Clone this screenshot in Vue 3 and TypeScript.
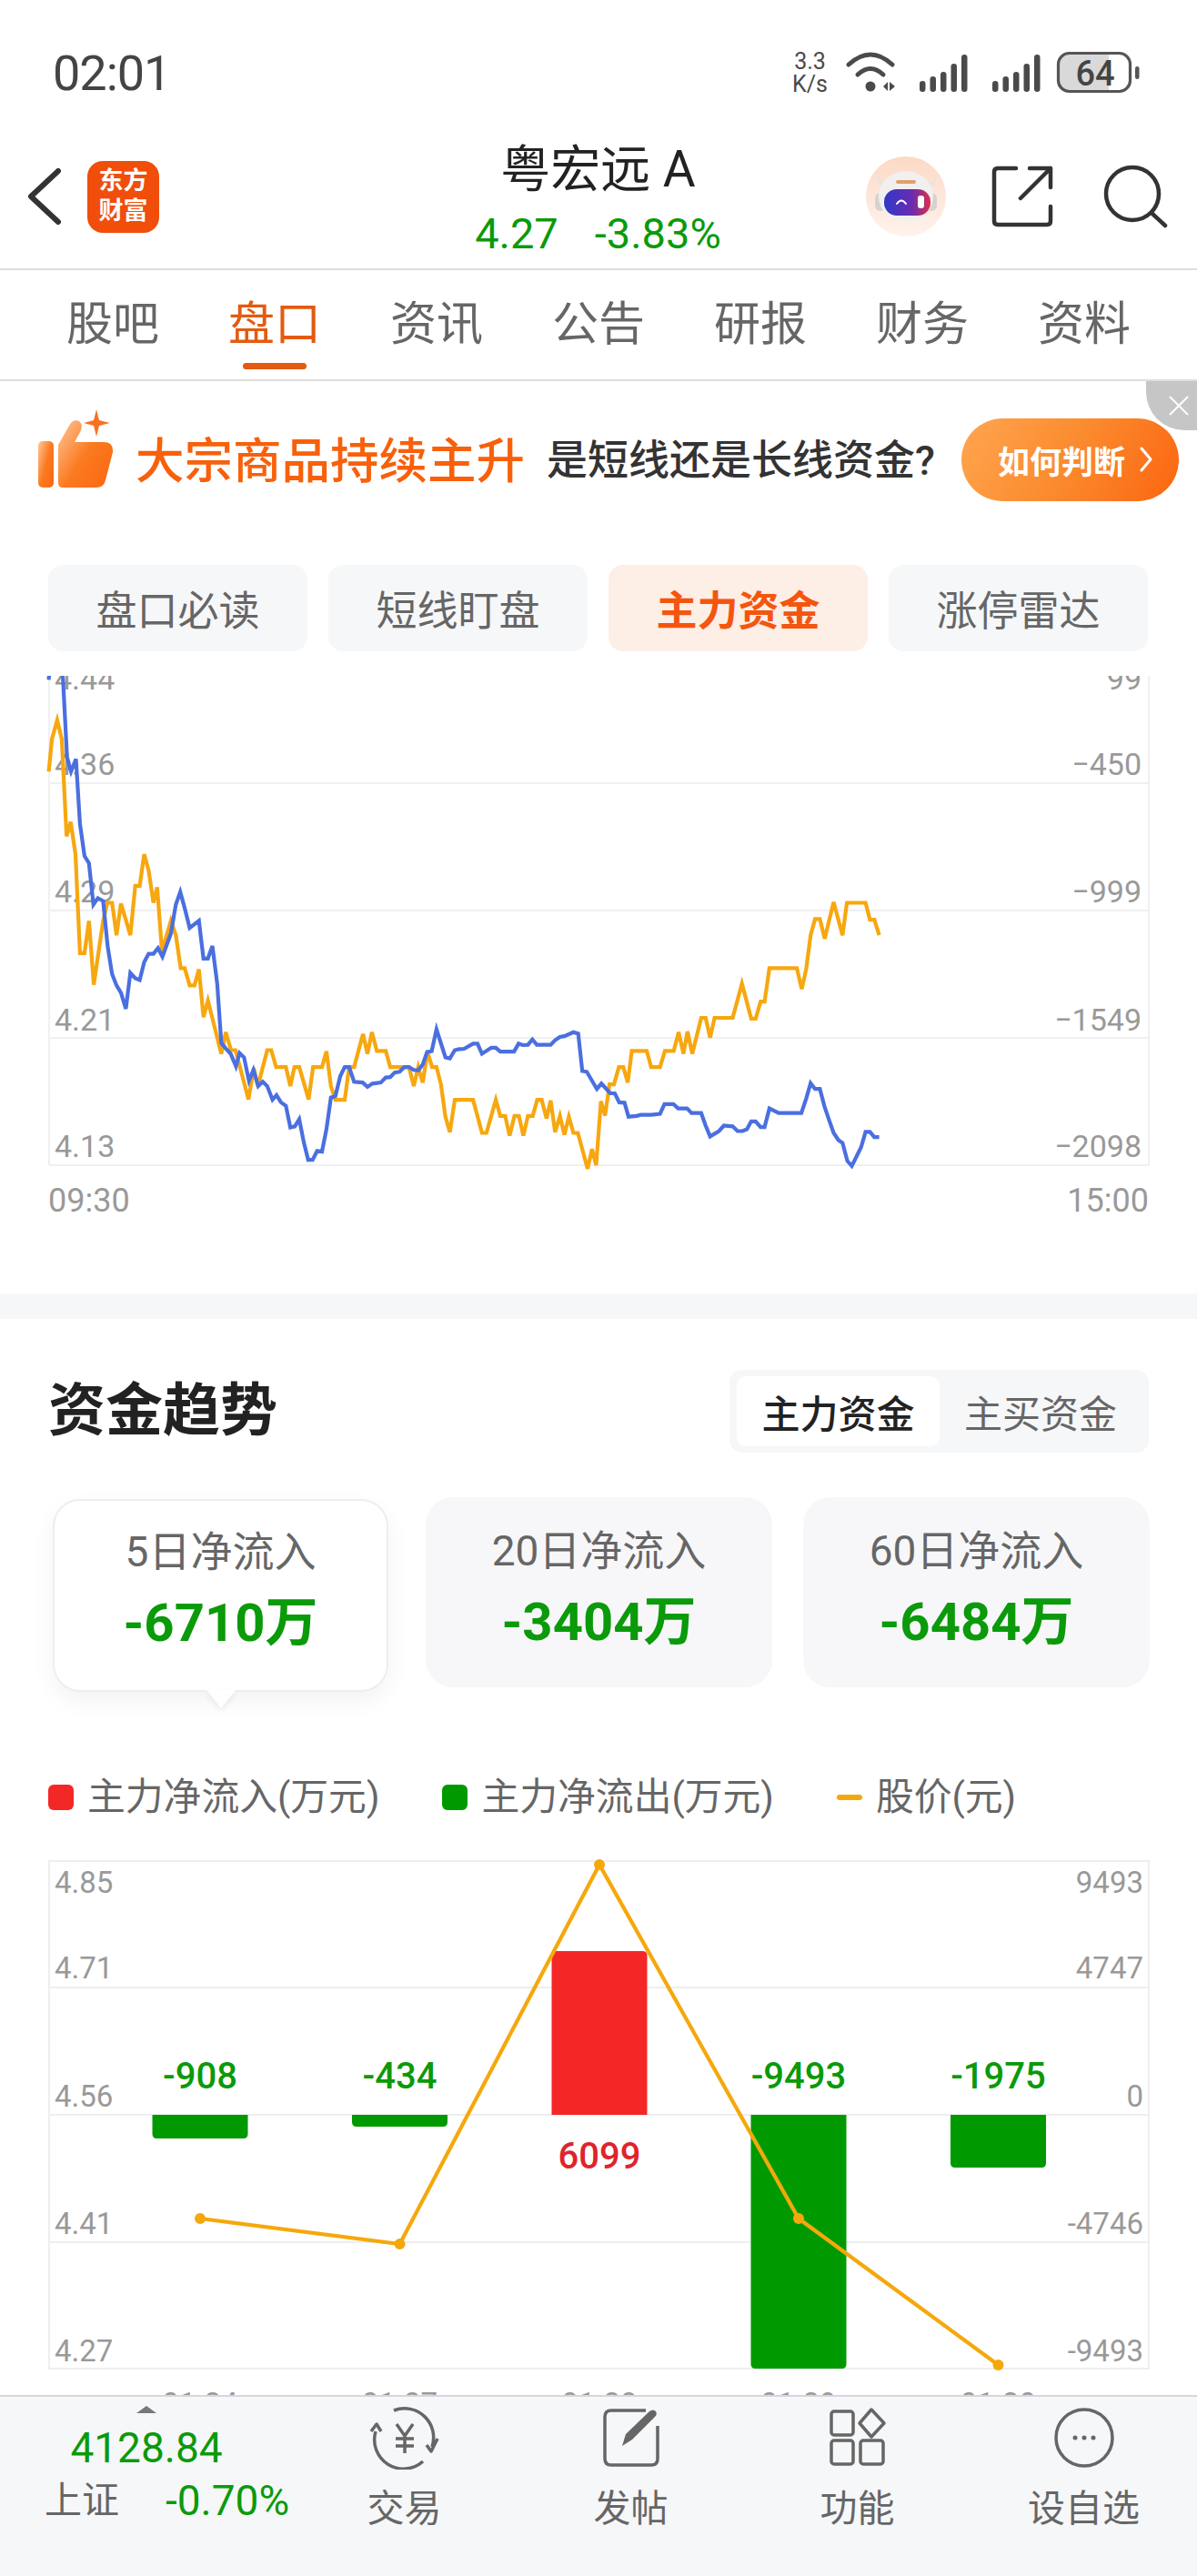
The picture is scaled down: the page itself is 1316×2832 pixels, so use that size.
<script setup lang="ts">
const tabs = ['股吧', '盘口', '资讯', '公告', '研报', '财务', '资料'];
const pills = ['盘口必读', '短线盯盘', '主力资金', '涨停雷达'];
const flows = [
  { label: '5日净流入', value: '-6710万' },
  { label: '20日净流入', value: '-3404万' },
  { label: '60日净流入', value: '-6484万' },
];
const legend = [
  { kind: 'red', text: '主力净流入(万元)' },
  { kind: 'green', text: '主力净流出(万元)' },
  { kind: 'line', text: '股价(元)' },
];

// traced by eye from the crops: [x, y] pairs in crop coordinates
const orangeA = [120,375,128,285,141,232,152,285,164,555,174,515,186,605,197,880,208,880,219,790,231,968,254,790,264,740,276,740,287,830,298,742,321,830,333,693,344,693,355,605,366,650,378,740,387,697,399,875,421,790,433,830,445,922,455,922,467,970,479,970,490,925,501,1058,512,1012,545,1160,556,1100,569,1150,580,1150,612,1287,625,1200,635,1250,658,1150,668,1150,680,1197,704,1197,715,1250,725,1197,737,1197,760,1287,771,1197,793,1197,804,1153,815,1250,826,1288,849,1288,860,1197,872,1197,894,1105,905,1160,916,1100,928,1152,950,1152,961,1197,1007,1197,1019,1250,1030,1197,1041,1240,1053,1155,1064,1197,1075,1197,1086,1245,1097,1335,1108,1378,1120,1288,1165,1288,1187,1380,1198,1380,1221,1288,1232,1333,1244,1333,1255,1388,1267,1333,1278,1333,1289,1388,1300,1333,1312,1333,1323,1288,1334,1288,1346,1340,1356,1290,1367,1378,1379,1333,1390,1385,1401,1335,1412,1380,1423,1380,1447,1480,1458,1425,1468,1470,1480,1292,1490,1332,1501,1245,1512,1245,1524,1197,1535,1197,1546,1240];
const orangeB = [168,1152,205,1152,216,1197,238,1197,250,1152,272,1152,284,1100,296,1160,306,1098,318,1160,340,1060,351,1060,362,1115,373,1060,418,1060,441,965,464,1062,475,1062,487,1015,497,1015,509,922,577,922,589,980,600,925,611,830,622,785,634,785,646,840,668,738,690,830,701,740,747,740,758,787,769,787,781,830];
const blueA = [120,120,122,90,150,90,155,115,165,335,175,375,187,340,197,520,208,610,219,630,230,745,241,727,254,735,265,860,276,938,287,970,298,990,310,1035,321,935,333,950,344,955,355,905,366,882,378,882,389,866,400,890,421,825,433,745,444,710,456,760,467,810,490,790,501,895,512,895,523,860,535,965,545,1130,556,1145,568,1160,581,1195,590,1158,601,1170,613,1235,624,1205,636,1250,647,1238,658,1250,671,1288,681,1275,692,1295,704,1305,715,1365,726,1362,737,1342,748,1405,759,1455,770,1455,781,1430,793,1432,804,1370,815,1282,826,1278,838,1222,849,1197,860,1197,872,1238,893,1240,905,1252,917,1243,938,1240,950,1226,961,1225,972,1212,984,1210,996,1197,1007,1197,1019,1205,1030,1206,1041,1190,1052,1155,1063,1153,1075,1092,1097,1170,1108,1173,1120,1150,1131,1147,1143,1146,1165,1132,1176,1132,1187,1160,1210,1143,1221,1143,1232,1154,1266,1154,1277,1132,1288,1136,1300,1135,1311,1120,1322,1135,1356,1135,1367,1122,1379,1113,1390,1111,1412,1100,1424,1104,1434,1208,1445,1210,1470,1258,1481,1243,1503,1270,1514,1270,1525,1295];
const blueB = [150,1296,160,1335,180,1333,190,1330,216,1330,238,1327,249,1300,271,1300,283,1312,305,1312,316,1325,340,1325,351,1360,362,1390,384,1375,396,1360,418,1362,430,1375,442,1375,453,1370,464,1348,475,1348,487,1364,497,1364,509,1312,532,1325,588,1325,600,1285,611,1242,622,1258,634,1258,645,1305,657,1345,668,1380,680,1400,690,1408,702,1458,713,1472,736,1420,747,1377,758,1377,769,1392,781,1392];

function toPoints(raw: number[], ox: number, sx: number): string {
  const out: string[] = [];
  for (let i = 0; i < raw.length; i += 2) {
    out.push(`${(ox + raw[i] / sx).toFixed(1)},${(700 + raw[i + 1] / 2.53).toFixed(1)}`);
  }
  return out.join(' ');
}

const orangeLine = toPoints(orangeA, 0, 2.24) + ' ' + toPoints(orangeB, 620, 2.253);
const blueLine = toPoints(blueA, 0, 2.24) + ' ' + toPoints(blueB, 620, 2.253);

const trendGrid = [861, 1001, 1141, 1281];
const trendLeft = [
  { t: '4.44', y: 758 }, { t: '4.36', y: 852 }, { t: '4.29', y: 992 }, { t: '4.21', y: 1133 }, { t: '4.13', y: 1272 },
];
const trendRight = [
  { t: '99', y: 758 }, { t: '−450', y: 852 }, { t: '−999', y: 992 }, { t: '−1549', y: 1133 }, { t: '−2098', y: 1272 },
];

const barGrid = [2185, 2325, 2465];
const barLeft = [
  { t: '4.85', y: 2081 }, { t: '4.71', y: 2175 }, { t: '4.56', y: 2316 }, { t: '4.41', y: 2456 }, { t: '4.27', y: 2596 },
];
const barRight = [
  { t: '9493', y: 2081 }, { t: '4747', y: 2175 }, { t: '0', y: 2316 }, { t: '-4746', y: 2456 }, { t: '-9493', y: 2596 },
];
const bars = [
  { x: 220, end: 2351, value: '-908', date: '01-24', py: 2439 },
  { x: 439.5, end: 2338, value: '-434', date: '01-27', py: 2467 },
  { x: 659, end: 2145, value: '6099', date: '01-28', py: 2050 },
  { x: 878, end: 2604, value: '-9493', date: '01-29', py: 2439 },
  { x: 1097.5, end: 2383, value: '-1975', date: '01-30', py: 2600 },
];
const priceLine = bars.map((b) => `${b.x},${b.py}`).join(' ');

function barPath(x: number, end: number): string {
  const l = x - 52.5;
  const r = x + 52.5;
  const dir = end > 2325 ? 1 : -1;
  return `M${l} 2325 V${end - dir * 5} Q${l} ${end} ${l + 5} ${end} H${r - 5} Q${r} ${end} ${r} ${end - dir * 5} V2325 Z`;
}

const signals = [0, 80];
const signalBars = [
  { x: 81, h: 12 }, { x: 92.5, h: 17 }, { x: 104, h: 22 }, { x: 115.5, h: 31 }, { x: 127, h: 41 },
];
</script>

<template>
  <div class="phone">
    <div class="status">
      <span class="time">02:01</span>
      <div class="status-right">
        <div class="speed"><span>3.3</span><span>K/s</span></div>
        <svg class="status-icons" width="324" height="50" viewBox="930 53 324 50">
          <g fill="none" stroke="#4a4a4a" stroke-width="5" stroke-linecap="round">
            <path d="M933 69 Q957 47 981 69" />
            <path d="M943 80 Q957 67 971 80" />
          </g>
          <circle cx="957" cy="93" r="5.5" fill="#4a4a4a" />
          <path d="M971 93 L976 88 V98 Z M978 88 L984 93 L978 98 Z" fill="#4a4a4a" />
          <g v-for="off in signals" :key="off" fill="#4a4a4a">
            <rect
              v-for="b in signalBars"
              :key="b.x"
              :x="930 + b.x + off"
              :y="99 - b.h"
              width="6.5"
              :height="b.h"
              rx="3.2"
            />
          </g>
          <path d="M1176 57 H1219 V98 H1176 Q1164 98 1164 86 V69 Q1164 57 1176 57 Z" fill="#d9d9d9" />
          <rect x="1163.5" y="56.5" width="79" height="42" rx="12" fill="none" stroke="#555" stroke-width="3.2" />
          <rect x="1248" y="71" width="4.5" height="14" rx="2.2" fill="#555" />
          <text x="1204" y="92" text-anchor="middle" class="batt">64</text>
        </svg>
      </div>
    </div>

    <header class="head">
      <div class="head-left">
        <svg width="40" height="68" viewBox="0 0 40 68">
          <path d="M34 6 L4 34 L34 62" fill="none" stroke="#333" stroke-width="6" stroke-linecap="round" stroke-linejoin="round" />
        </svg>
        <div class="logo"><span>东方</span><span>财富</span></div>
      </div>
      <div class="head-title">
        <div class="title">粤宏远 A</div>
        <div class="quote"><span>4.27</span><span>-3.83%</span></div>
      </div>
      <div class="head-right">
        <svg class="avatar" width="88" height="88" viewBox="953 172 88 88">
          <defs>
            <linearGradient id="peach" x1="0" y1="0" x2="0" y2="1">
              <stop offset="0" stop-color="#fcd9c6" />
              <stop offset="1" stop-color="#fff3ec" />
            </linearGradient>
            <linearGradient id="visor" x1="0" y1="0" x2="1" y2="0">
              <stop offset="0" stop-color="#3038c8" />
              <stop offset="0.6" stop-color="#6a2cb0" />
              <stop offset="1" stop-color="#dc3048" />
            </linearGradient>
          </defs>
          <circle cx="997" cy="216" r="44" fill="url(#peach)" />
          <path d="M966 190 Q968 200 975 202 L972 208 Q964 202 966 190 Z M1030 190 Q1028 200 1021 202 L1024 208 Q1032 202 1030 190 Z" fill="#e8e4e0" />
          <rect x="963" y="212" width="12" height="20" rx="6" fill="#d5d2d0" />
          <rect x="1019" y="212" width="12" height="20" rx="6" fill="#d5d2d0" />
          <ellipse cx="997" cy="216" rx="30" ry="28" fill="#f2f0ee" />
          <rect x="986" y="198" width="22" height="4" rx="2" fill="#e0a070" />
          <rect x="973" y="208" width="51" height="29" rx="14" fill="url(#visor)" />
          <path d="M987 224 Q992 217 997 224" fill="none" stroke="#fff" stroke-width="2" stroke-linecap="round" />
          <rect x="1010" y="215" width="7" height="14" rx="3" fill="#fff" />
        </svg>
        <svg class="share" width="68" height="68" viewBox="0 0 68 68">
          <path d="M27 3 H7 Q3 3 3 7 V61 Q3 65 7 65 H61 Q65 65 65 61 V45 M32 36 L65 3 M42 3 H65 V24" fill="none" stroke="#333" stroke-width="4.5" stroke-linecap="round" stroke-linejoin="round" />
        </svg>
        <svg class="search" width="72" height="72" viewBox="0 0 72 72">
          <circle cx="32" cy="33" r="29" fill="none" stroke="#333" stroke-width="4.5" />
          <path d="M54 55 L68 68" stroke="#333" stroke-width="4.5" stroke-linecap="round" />
        </svg>
      </div>
    </header>

    <nav class="tabs">
      <span v-for="(t, i) in tabs" :key="t" class="tab" :class="{ on: i === 1 }">{{ t }}</span>
    </nav>

    <main class="body">
      <section class="banner">
        <svg class="thumb" width="84" height="112" viewBox="42 449 84 112">
          <defs>
            <linearGradient id="thumbFill" x1="0" y1="0" x2="1" y2="0.8">
              <stop offset="0" stop-color="#ffc79a" />
              <stop offset="0.55" stop-color="#fb7a20" />
              <stop offset="1" stop-color="#fb6a14" />
            </linearGradient>
          </defs>
          <rect x="42" y="486" width="17" height="51" rx="5" fill="url(#thumbFill)" />
          <path d="M64 532 V490 L76 469 Q80 461 87 464 Q92 468 88 476 L82 487 H114 Q125 487 124 498 L116 529 Q114 537 106 537 H69 Q64 537 64 532 Z" fill="url(#thumbFill)" />
          <path d="M106 451 L109 463 L121 466 L109 469 L106 481 L103 469 L92 466 L103 463 Z" fill="#fb7020" />
        </svg>
        <span class="promo-a">大宗商品持续主升</span>
        <span class="promo-b">是短线还是长线资金?</span>
        <div class="promo-btn">
          <span>如何判断</span>
          <svg width="16" height="30" viewBox="0 0 16 30">
            <path d="M3 3 L13 15 L3 27" fill="none" stroke="#fff" stroke-width="3" stroke-linecap="round" stroke-linejoin="round" />
          </svg>
        </div>
        <div class="close">
          <svg width="24" height="24" viewBox="0 0 24 24">
            <path d="M2 2 L22 22 M22 2 L2 22" stroke="#fff" stroke-width="2" />
          </svg>
        </div>
      </section>

      <div class="pills">
        <span v-for="(p, i) in pills" :key="p" class="pill" :class="{ on: i === 2 }">{{ p }}</span>
      </div>

      <svg class="trend" width="1316" height="679" viewBox="0 743 1316 679">
        <path d="M54 743 V1281 M1263 743 V1281" stroke="#f0f0f2" stroke-width="2" fill="none" />
        <line v-for="y in trendGrid" :key="y" x1="54" x2="1263" :y1="y" :y2="y" stroke="#f0f0f2" stroke-width="2" />
        <text v-for="l in trendLeft" :key="l.t" x="60" :y="l.y" class="axis">{{ l.t }}</text>
        <text v-for="l in trendRight" :key="l.t" x="1255" :y="l.y" class="axis" text-anchor="end">{{ l.t }}</text>
        <polyline :points="orangeLine" fill="none" stroke="#f7a70f" stroke-width="4.2" stroke-linejoin="miter" />
        <polyline :points="blueLine" fill="none" stroke="#4a6fe0" stroke-width="4.2" stroke-linejoin="miter" />
        <text x="53" y="1332" class="axis clock">09:30</text>
        <text x="1263" y="1332" class="axis clock" text-anchor="end">15:00</text>
      </svg>

      <div class="strip"></div>

      <div class="sec-head">
        <h2>资金趋势</h2>
        <div class="toggle">
          <span class="on">主力资金</span>
          <span>主买资金</span>
        </div>
      </div>

      <div class="cards">
        <div v-for="(c, i) in flows" :key="c.label" class="card" :class="{ on: i === 0 }">
          <span class="card-label">{{ c.label }}</span>
          <span class="card-value">{{ c.value }}</span>
        </div>
      </div>

      <div class="legend">
        <div v-for="l in legend" :key="l.text" class="legend-item">
          <i :class="l.kind"></i>
          <span>{{ l.text }}</span>
        </div>
      </div>

      <svg class="bars" width="1316" height="620" viewBox="0 2040 1316 620">
        <rect x="54" y="2046" width="1209" height="558" fill="none" stroke="#eeeef0" stroke-width="2" />
        <line v-for="y in barGrid" :key="y" x1="54" x2="1263" :y1="y" :y2="y" stroke="#eeeef0" stroke-width="2" />
        <text v-for="l in barLeft" :key="l.t" x="60" :y="l.y" class="axis small">{{ l.t }}</text>
        <text v-for="l in barRight" :key="l.t" x="1257" :y="l.y" class="axis small" text-anchor="end">{{ l.t }}</text>
        <g v-for="b in bars" :key="b.date">
          <path :d="barPath(b.x, b.end)" :fill="b.end > 2325 ? '#009a00' : '#f42727'" />
          <text
            :x="b.x"
            :y="b.end > 2325 ? 2296 : 2384"
            text-anchor="middle"
            class="bar-val"
            :fill="b.end > 2325 ? '#0a9a0a' : '#e0232b'"
          >{{ b.value }}</text>
          <text :x="b.x" y="2654" text-anchor="middle" class="axis small">{{ b.date }}</text>
        </g>
        <polyline :points="priceLine" fill="none" stroke="#f5a80c" stroke-width="4.2" />
        <circle v-for="b in bars" :key="b.x" :cx="b.x" :cy="b.py" r="6" fill="#f5a80c" />
      </svg>
    </main>

    <footer class="dock">
      <div class="index">
        <svg class="tri" width="24" height="8" viewBox="0 0 24 8"><path d="M12 0 L23 8 H1 Z" fill="#777" /></svg>
        <div class="index-val">4128.84</div>
        <div class="index-row"><span class="index-name">上证</span><span class="index-pct">-0.70%</span></div>
      </div>
      <div class="dock-item">
        <svg width="80" height="70" viewBox="0 0 80 70" fill="none" stroke="#666" stroke-width="3.5">
          <path d="M28 5 A32 32 0 0 1 70 45" />
          <path d="M76 36 L69 50 L64 43" stroke-linejoin="round" />
          <path d="M8 28 A32 32 0 0 0 60 61" />
          <path d="M3 28 L9 20 L14 28" stroke-linejoin="round" />
          <path d="M31 20 L40 33 L49 20 M40 33 V52 M30 36 H50 M30 44 H50" />
        </svg>
        <span>交易</span>
      </div>
      <div class="dock-item">
        <svg width="80" height="70" viewBox="0 0 80 70" fill="none" stroke="#666" stroke-width="3.5">
          <path d="M56 5 H18 Q11 5 11 12 V58 Q11 65 18 65 H62 Q69 65 69 58 V22" />
          <path d="M30 44 L34 31 L60 6 Q64 3 67 6 Q69 9 66 12 L41 37 Z" fill="#666" stroke="none" />
        </svg>
        <span>发帖</span>
      </div>
      <div class="dock-item">
        <svg width="80" height="70" viewBox="0 0 80 70" fill="none" stroke="#666" stroke-width="3.5">
          <rect x="11" y="6" width="24" height="26" rx="3" />
          <path d="M55 4 L69 19 L55 34 L42 19 Z" stroke-linejoin="round" />
          <rect x="11" y="38" width="24" height="26" rx="3" />
          <rect x="43" y="38" width="25" height="26" rx="3" />
        </svg>
        <span>功能</span>
      </div>
      <div class="dock-item">
        <svg width="80" height="70" viewBox="0 0 80 70" fill="none" stroke="#666" stroke-width="3.5">
          <circle cx="40" cy="35" r="31" />
          <circle cx="30" cy="35" r="2.5" fill="#666" stroke="none" />
          <circle cx="40" cy="35" r="2.5" fill="#666" stroke="none" />
          <circle cx="50" cy="35" r="2.5" fill="#666" stroke="none" />
        </svg>
        <span>设自选</span>
      </div>
    </footer>
  </div>
</template>

<style scoped>
.phone {
  width: 1316px;
  height: 2832px;
  display: flex;
  flex-direction: column;
  overflow: hidden;
  background: #fff;
  font-family: Roboto, "Noto Sans CJK SC", sans-serif;
  color: #333;
}

.status {
  height: 150px;
  box-sizing: border-box;
  padding: 10px 62px 0 58px;
  display: flex;
  align-items: center;
  justify-content: space-between;
}
.time {
  font-size: 54px;
  letter-spacing: -1px;
  color: #444;
}
.status-right {
  display: flex;
  align-items: center;
  gap: 20px;
}
.status-icons {
  display: block;
}
.batt {
  font-size: 38px;
  font-weight: 500;
  fill: #444;
}
.speed {
  display: flex;
  flex-direction: column;
  align-items: center;
  font-size: 25px;
  line-height: 25px;
  color: #4a4a4a;
}

.head {
  height: 147px;
  box-sizing: border-box;
  padding: 0 31px 13px 30px;
  border-bottom: 2px solid #dedede;
  display: grid;
  grid-template-columns: 1fr auto 1fr;
  align-items: center;
}
.head-left {
  display: flex;
  align-items: center;
  gap: 26px;
}
.logo {
  width: 79px;
  height: 79px;
  border-radius: 17px;
  background: #f04e0a;
  color: #fff;
  font-size: 27px;
  font-weight: 700;
  line-height: 33px;
  display: flex;
  flex-direction: column;
  align-items: center;
  justify-content: center;
}
.head-title {
  margin-top: 4px;
  display: flex;
  flex-direction: column;
  align-items: center;
  gap: 16px;
}
.title {
  font-size: 55px;
  line-height: 62px;
  color: #222;
}
.quote {
  display: flex;
  gap: 40px;
  font-size: 47px;
  line-height: 48px;
  color: #0a9a0a;
}
.head-right {
  display: flex;
  align-items: center;
  justify-content: flex-end;
}
.share {
  margin-left: 50px;
}
.search {
  margin-left: 55px;
}

.tabs {
  height: 122px;
  padding: 0 35px;
  border-bottom: 2px solid #dedede;
  display: grid;
  grid-template-columns: repeat(7, 1fr);
  align-items: center;
  box-sizing: border-box;
}
.tab {
  position: relative;
  text-align: center;
  font-size: 51px;
  line-height: 70px;
  color: #666;
}
.tab.on {
  color: #e35b10;
}
.tab.on::after {
  content: "";
  position: absolute;
  left: 50%;
  bottom: -14px;
  width: 70px;
  height: 7px;
  margin-left: -35px;
  border-radius: 4px;
  background: #e35b10;
}

.body {
  flex: 1;
  min-height: 0;
  overflow: hidden;
}

.banner {
  position: relative;
  height: 172px;
  padding: 0 20px 0 42px;
  display: flex;
  align-items: center;
  box-sizing: border-box;
}
.thumb {
  margin-bottom: 3px;
}
.promo-a {
  margin: 0 0 6px 23px;
  font-size: 53.5px;
  font-weight: 500;
  color: #f8600b;
  white-space: nowrap;
}
.promo-b {
  margin: 0 0 6px 24px;
  font-size: 45px;
  font-weight: 500;
  color: #333;
  white-space: nowrap;
}
.promo-btn {
  margin-left: auto;
  width: 239px;
  height: 91px;
  padding-left: 40px;
  box-sizing: border-box;
  border-radius: 46px;
  background: linear-gradient(120deg, #ffa650 0%, #fb8a2e 50%, #fb6510 100%);
  display: flex;
  align-items: center;
  gap: 15px;
  color: #fff;
  font-size: 35px;
  font-weight: 700;
}
.close {
  position: absolute;
  top: 0;
  right: 0;
  width: 56px;
  height: 54px;
  border-bottom-left-radius: 42px;
  background: #c6c6c6;
  display: flex;
  align-items: center;
  justify-content: flex-end;
  padding-right: 8px;
  box-sizing: border-box;
}

.pills {
  margin-top: 30px;
  padding: 0 53px;
  display: grid;
  grid-template-columns: repeat(4, 285px);
  gap: 23px;
}
.pill {
  height: 95px;
  border-radius: 16px;
  background: #f6f7f9;
  color: #666;
  font-size: 45px;
  display: flex;
  align-items: center;
  justify-content: center;
}
.pill.on {
  background: #fdeee6;
  color: #f4550f;
  font-weight: 700;
}

.trend {
  display: block;
  margin-top: 27px;
}
.axis {
  font-size: 34px;
  fill: #999;
}
.axis.clock {
  font-size: 36px;
}
.axis.small {
  font-size: 33px;
}
.bar-val {
  font-size: 40px;
  font-weight: 500;
}

.strip {
  height: 28px;
  background: #f6f7f9;
}

.sec-head {
  margin-top: 56px;
  padding: 0 53px;
  display: flex;
  align-items: center;
  justify-content: space-between;
}
.sec-head h2 {
  margin: -14px 0 0;
  font-size: 63px;
  font-weight: 700;
  color: #222;
}
.toggle {
  width: 461px;
  height: 91px;
  padding: 7px 8px;
  box-sizing: border-box;
  border-radius: 14px;
  background: #f6f7f9;
  display: flex;
  font-size: 42px;
  color: #666;
}
.toggle span {
  flex: 1;
  display: flex;
  align-items: center;
  justify-content: center;
}
.toggle .on {
  flex: 0 0 223px;
  border-radius: 10px;
  background: #fff;
  color: #222;
  font-weight: 500;
}

.cards {
  margin-top: 49px;
  padding-left: 53px;
  display: grid;
  grid-template-columns: repeat(3, 381px);
  gap: 34px;
}
.card {
  position: relative;
  height: 209px;
  box-sizing: border-box;
  padding-top: 31px;
  border-radius: 30px;
  background: #f7f7f9;
  display: flex;
  flex-direction: column;
  align-items: center;
}
.card.on {
  height: 212px;
  margin: 2px 7px -5px 5px;
  padding-top: 28px;
  background: #fff;
  border: 2px solid #eee;
  box-shadow: 0 10px 26px rgba(0, 0, 0, 0.05);
}
.card.on::after {
  content: "";
  position: absolute;
  top: 100%;
  left: 50%;
  margin-left: -16px;
  border-top: 20px solid #fff;
  border-left: 16px solid transparent;
  border-right: 16px solid transparent;
  filter: drop-shadow(0 3px 3px rgba(0, 0, 0, 0.07));
}
.card-label {
  font-size: 46px;
  line-height: 56px;
  color: #666;
}
.card-value {
  margin-top: 15px;
  font-size: 58px;
  line-height: 70px;
  font-weight: 700;
  color: #0a9a0a;
}

.legend {
  margin-top: 93px;
  padding-left: 53px;
  display: flex;
  gap: 69px;
  font-size: 41.8px;
  line-height: 56px;
  color: #666;
}
.legend-item {
  display: flex;
  align-items: center;
  gap: 15px;
}
.legend-item i {
  width: 28px;
  height: 28px;
  border-radius: 6px;
}
.legend-item i.red {
  background: #f42727;
}
.legend-item i.green {
  background: #009a00;
}
.legend-item i.line {
  height: 6px;
  border-radius: 3px;
  background: #f5a80c;
}

.bars {
  display: block;
  margin-top: 36px;
}

.dock {
  height: 199px;
  box-sizing: border-box;
  border-top: 2px solid #d5d7dc;
  background: #f6f7f9;
  display: grid;
  grid-template-columns: 320px repeat(4, 1fr);
}
.index {
  padding-top: 10px;
  display: flex;
  flex-direction: column;
  white-space: nowrap;
}
.tri {
  display: block;
  margin-left: 149px;
}
.index-val {
  margin-top: 10px;
  width: 322px;
  text-align: center;
  font-size: 46px;
  line-height: 56px;
  color: #0a9a0a;
}
.index-row {
  margin-top: 2px;
  padding-left: 49px;
  display: flex;
  align-items: center;
  gap: 51px;
  line-height: 56px;
}
.index-name {
  flex: none;
  font-size: 41px;
  color: #666;
}
.index-pct {
  flex: none;
  font-size: 46px;
  color: #0a9a0a;
}
.dock-item {
  padding-top: 10px;
  display: flex;
  flex-direction: column;
  align-items: center;
  font-size: 41px;
  line-height: 50px;
  color: #666;
}
.dock-item span {
  margin-top: 18px;
}
</style>
